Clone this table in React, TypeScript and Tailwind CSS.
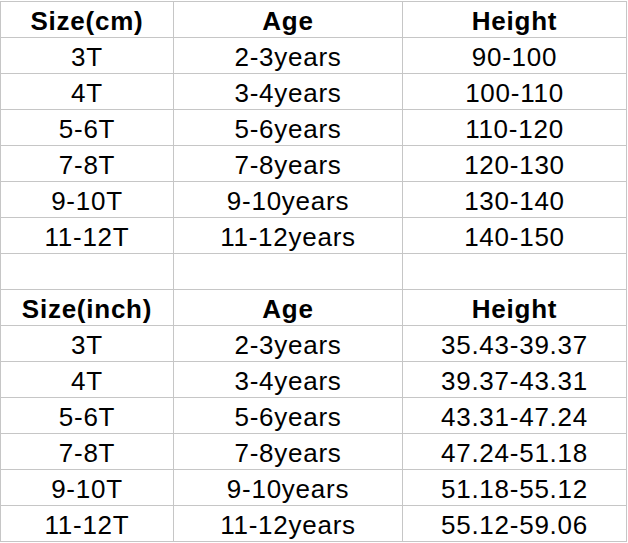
import React from "react";

const cm = [
  ["3T", "2-3years", "90-100"],
  ["4T", "3-4years", "100-110"],
  ["5-6T", "5-6years", "110-120"],
  ["7-8T", "7-8years", "120-130"],
  ["9-10T", "9-10years", "130-140"],
  ["11-12T", "11-12years", "140-150"],
];
const inch = [
  ["3T", "2-3years", "35.43-39.37"],
  ["4T", "3-4years", "39.37-43.31"],
  ["5-6T", "5-6years", "43.31-47.24"],
  ["7-8T", "7-8years", "47.24-51.18"],
  ["9-10T", "9-10years", "51.18-55.12"],
  ["11-12T", "11-12years", "55.12-59.06"],
];

function Row({ cells, bold }: { cells: string[]; bold?: boolean }) {
  return (
    <>
      {cells.map((c, i) => (
        <div
          key={i}
          className={`h-[36px] pt-[3px] flex items-center justify-center border-r border-b border-[#c6c6c6] text-[26px] tracking-[0.75px] text-black leading-none ${
            bold ? "font-bold" : "font-normal"
          }`}
        >
          {c}
        </div>
      ))}
    </>
  );
}

export default function App() {
  return (
    <div className="w-[628px] h-[543px] bg-white pt-[1px]" style={{ fontFamily: '"Liberation Sans", Arial, sans-serif' }}>
      <div className="grid grid-cols-[173px_229px_224px] w-[627px] border-l border-t border-[#c6c6c6]">
        <Row cells={["Size(cm)", "Age", "Height"]} bold />
        {cm.map((r, i) => (
          <Row key={"c" + i} cells={r} />
        ))}
        <Row cells={["", "", ""]} />
        <Row cells={["Size(inch)", "Age", "Height"]} bold />
        {inch.map((r, i) => (
          <Row key={"i" + i} cells={r} />
        ))}
      </div>
    </div>
  );
}
